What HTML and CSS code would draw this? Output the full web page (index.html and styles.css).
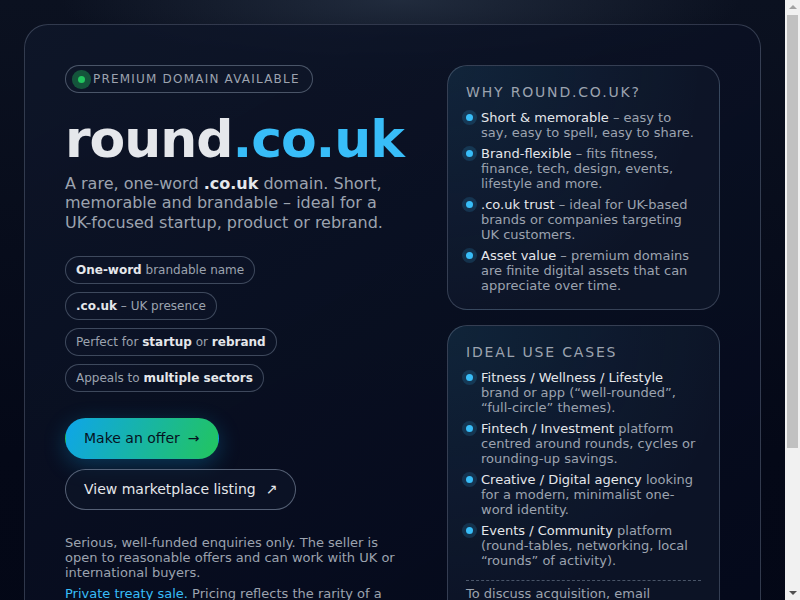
FILE: index.html
```html
<!DOCTYPE html>
<html lang="en">
<head>
<meta charset="utf-8">
<title>round.co.uk – Premium domain for sale</title>
<link rel="stylesheet" href="styles.css">
</head>
<body>
<main class="shell">
  <section class="hero">
    <div class="main-col">
      <span class="badge"><span class="badge-dot"></span>Premium domain available</span>
      <h1 class="title">round<span class="tld">.co.uk</span></h1>
      <p class="lead">A rare, one-word <strong>.co.uk</strong> domain. Short, memorable and brandable – ideal for a UK-focused startup, product or rebrand.</p>
      <ul class="chips">
        <li class="chip"><strong>One-word</strong> brandable name</li>
        <li class="chip"><strong>.co.uk</strong> – UK presence</li>
        <li class="chip">Perfect for <strong>startup</strong> or <strong>rebrand</strong></li>
        <li class="chip">Appeals to <strong>multiple sectors</strong></li>
      </ul>
      <div class="actions">
        <a class="btn btn-primary" href="#offer">Make an offer <span class="btn-icon">→</span></a>
        <a class="btn btn-ghost" href="#listing">View marketplace listing <span class="btn-icon">↗</span></a>
      </div>
      <p class="note">Serious, well-funded enquiries only. The seller is open to reasonable offers and can work with UK or international buyers.</p>
      <p class="note note-tight"><span class="accent">Private treaty sale.</span> Pricing reflects the rarity of a one-word .co.uk and its long-term brand value.</p>
    </div>
    <aside class="side-col">
      <div class="panel">
        <h2 class="panel-title">Why round.co.uk?</h2>
        <ul class="points">
          <li><span><span class="key">Short &amp; memorable</span> – easy to say, easy to spell, easy to share.</span></li>
          <li><span><span class="key">Brand-flexible</span> – fits fitness, finance, tech, design, events, lifestyle and more.</span></li>
          <li><span><span class="key">.co.uk trust</span> – ideal for UK-based brands or companies targeting UK customers.</span></li>
          <li><span><span class="key">Asset value</span> – premium domains are finite digital assets that can appreciate over time.</span></li>
        </ul>
      </div>
      <div class="panel">
        <h2 class="panel-title">Ideal use cases</h2>
        <ul class="points">
          <li><span><span class="key">Fitness / Wellness / Lifestyle</span> brand or app (“well-rounded”, “full-circle” themes).</span></li>
          <li><span><span class="key">Fintech / Investment</span> platform centred around rounds, cycles or rounding-up savings.</span></li>
          <li><span><span class="key">Creative / Digital agency</span> looking for a modern, minimalist one-word identity.</span></li>
          <li><span><span class="key">Events / Community</span> platform (round-tables, networking, local “rounds” of activity).</span></li>
        </ul>
        <p class="panel-foot">To discuss acquisition, email <span class="accent">hello@round.co.uk</span> with your offer.</p>
      </div>
    </aside>
  </section>
  <footer class="foot">
    <p class="copy">© round.co.uk · Domain for sale · Enquiries handled privately</p>
  </footer>
</main>
<div class="scrollbar" aria-hidden="true">
  <span class="sb-btn sb-up"></span>
  <span class="sb-track"><span class="sb-thumb" style="height: 433px"></span></span>
  <span class="sb-btn sb-down"></span>
</div>
</body>
</html>
```

FILE: styles.css
```css
html {
  background: #030716;
}

body {
  margin: 0;
  padding: 24px 39px 24px 24px;
  font-family: "DejaVu Sans", "Noto Sans", sans-serif;
  color: #e5e7eb;
  background:
    radial-gradient(ellipse 340px 70px at 50% 0%, rgba(51, 65, 85, 0.55), rgba(51, 65, 85, 0) 100%),
    linear-gradient(180deg, #0b1120 0%, #040817 60%, #030716 100%);
}

/* mock browser scrollbar (overlay) */
.scrollbar {
  position: fixed;
  top: 0;
  right: 0;
  bottom: 0;
  width: 15px;
  display: flex;
  flex-direction: column;
  background: #f1f1f1;
}

.sb-btn {
  height: 15px;
  flex: none;
  display: flex;
  align-items: center;
  justify-content: center;
}

.sb-btn::before {
  content: "";
  border-left: 4px solid transparent;
  border-right: 4px solid transparent;
}

.sb-up::before {
  border-bottom: 4px solid #a3a3a3;
  margin-top: -1px;
}

.sb-down::before {
  border-top: 4px solid #505050;
  margin-bottom: -1px;
}

.sb-track {
  flex: 1;
  display: flex;
  flex-direction: column;
  padding: 0 2px;
}

.sb-thumb {
  display: block;
  background: #c1c1c1;
}

.shell {
  border: 1px solid rgba(148, 163, 184, 0.3);
  border-radius: 24px;
  padding: 40px;
  background: linear-gradient(150deg, rgba(15, 23, 42, 0.85) 0%, rgba(8, 14, 32, 0.9) 55%, rgba(3, 8, 26, 0.95) 100%);
}

.hero {
  display: grid;
  grid-template-columns: minmax(0, 1fr) 273px;
  column-gap: 44px;
  align-items: start;
}

/* badge */
.badge {
  display: inline-flex;
  align-items: center;
  gap: 8px;
  padding: 6px 12px;
  border: 1px solid rgba(148, 163, 184, 0.45);
  border-radius: 999px;
  font-size: 12px;
  line-height: 14px;
  letter-spacing: 0.1em;
  text-transform: uppercase;
  color: #9ca3af;
  background: rgba(15, 23, 42, 0.5);
}

.badge-dot {
  width: 7px;
  height: 7px;
  border-radius: 50%;
  background: #22c55e;
  box-shadow: 0 0 0 6px rgba(34, 197, 94, 0.36);
}

/* title */
.title {
  margin: 18px 0 0;
  font-size: 52px;
  font-weight: 700;
  line-height: 1.1;
  letter-spacing: -0.02em;
  color: #e5e7eb;
}

.tld {
  color: #38bdf8;
}

.lead {
  margin: 6px 0 0;
  font-size: 16px;
  line-height: 1.2;
  color: #9ca3af;
}

.lead strong {
  color: #e5e7eb;
}

/* chips */
.chips {
  list-style: none;
  margin: 24px 0 0;
  padding: 0;
  display: flex;
  flex-direction: column;
  align-items: flex-start;
  gap: 8px;
}

.chip {
  padding: 6px 10px;
  border: 1px solid rgba(148, 163, 184, 0.38);
  border-radius: 999px;
  font-size: 12px;
  line-height: 14px;
  color: #9ca3af;
  background: rgba(15, 23, 42, 0.4);
}

.chip strong {
  color: #e5e7eb;
}

/* actions */
.actions {
  margin-top: 26px;
  display: flex;
  flex-direction: column;
  align-items: flex-start;
  gap: 10px;
}

.btn {
  display: inline-flex;
  align-items: center;
  gap: 8px;
  padding: 12px 18px;
  border: 1px solid transparent;
  border-radius: 999px;
  font-size: 14px;
  line-height: 15px;
  text-decoration: none;
}

.btn-primary {
  color: #06121f;
  background: linear-gradient(115deg, #0ea5e9 0%, #22c55e 100%);
  box-shadow: 0 6px 22px rgba(14, 165, 233, 0.28);
}

.btn-ghost {
  gap: 10px;
  color: #e5e7eb;
  border-color: rgba(148, 163, 184, 0.55);
  background: rgba(15, 23, 42, 0.55);
}

/* notes */
.note {
  margin: 25px 0 0;
  font-size: 13px;
  line-height: normal;
  color: #9ca3af;
}

.note-tight {
  margin-top: 6px;
}

.accent {
  color: #38bdf8;
}

/* side panels */
.side-col {
  display: flex;
  flex-direction: column;
  gap: 15px;
}

.panel {
  border: 1px solid rgba(148, 163, 184, 0.3);
  border-radius: 20px;
  padding: 18px 18px 16px;
  background:
    radial-gradient(circle at 0% 0%, rgba(56, 189, 248, 0.09), rgba(56, 189, 248, 0) 70%),
    rgba(15, 23, 42, 0.75);
}

.panel-title {
  margin: 0;
  font-size: 14px;
  font-weight: 400;
  line-height: normal;
  letter-spacing: 0.13em;
  text-transform: uppercase;
  color: #9ca3af;
}

.points {
  list-style: none;
  margin: 10px 0 0;
  padding: 0;
  display: flex;
  flex-direction: column;
  gap: 6px;
  font-size: 13px;
  line-height: normal;
  color: #9ca3af;
}

.points li {
  display: grid;
  grid-template-columns: 7px minmax(0, 1fr);
  column-gap: 8px;
  align-items: start;
}

.points li::before {
  content: "";
  width: 7px;
  height: 7px;
  margin-top: 4px;
  border-radius: 50%;
  background: #38bdf8;
  box-shadow: 0 0 0 4px rgba(56, 189, 248, 0.16);
}

.key {
  color: #e5e7eb;
}

.panel-foot {
  margin: 12px 0 0;
  padding-top: 5px;
  border-top: 1px dashed rgba(148, 163, 184, 0.45);
  font-size: 13px;
  line-height: normal;
  color: #9ca3af;
}

/* footer */
.foot {
  margin-top: 28px;
  padding-top: 14px;
  border-top: 1px solid rgba(148, 163, 184, 0.18);
}

.copy {
  margin: 0;
  font-size: 12px;
  color: #6b7280;
}
```
